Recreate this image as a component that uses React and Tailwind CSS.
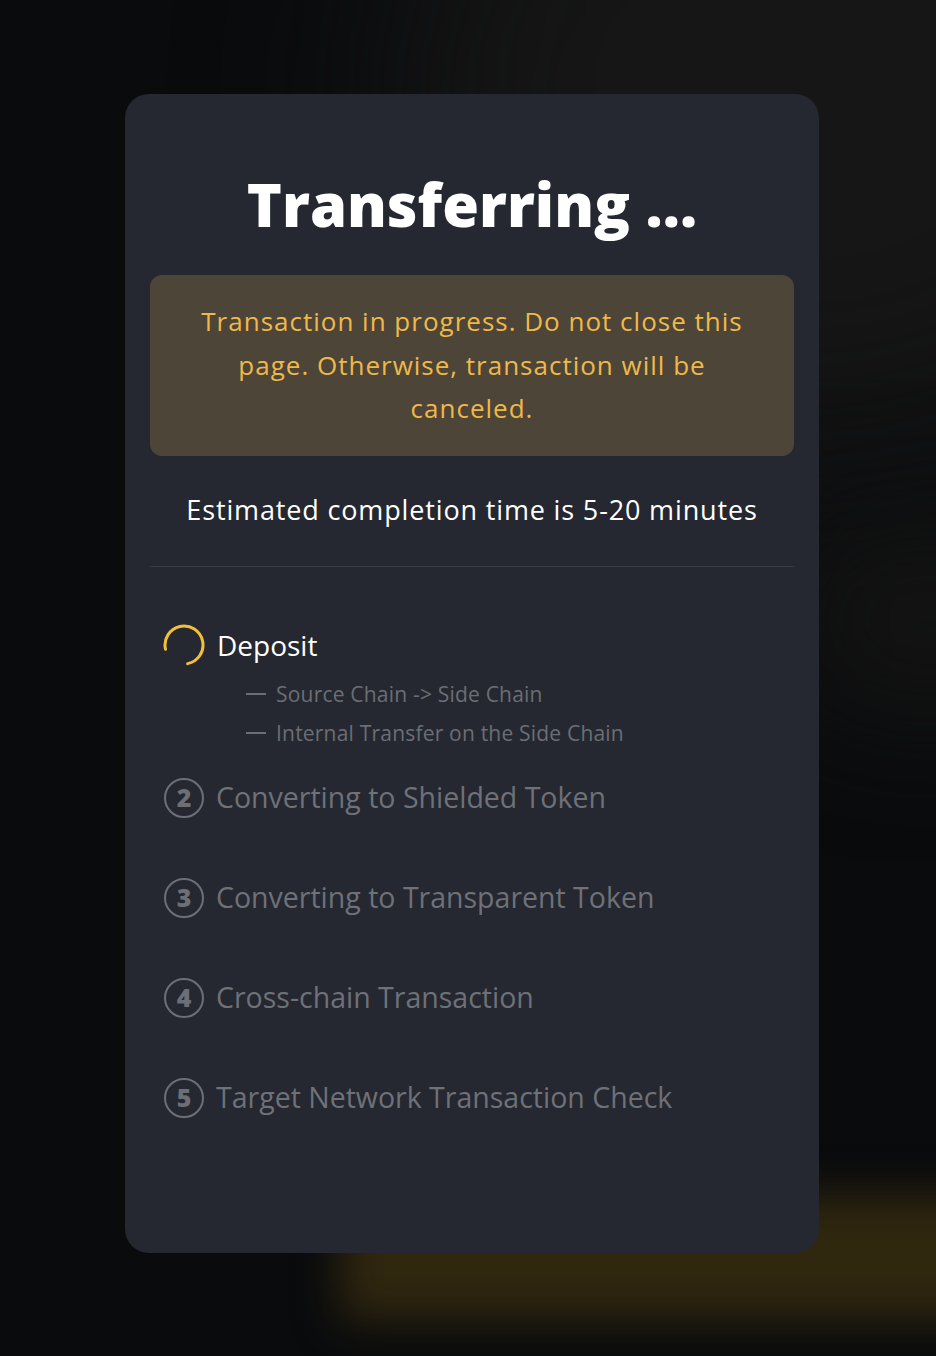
import React from "react";

function Spinner() {
  return (
    <svg width="42" height="42" viewBox="0 0 42 42" className="shrink-0">
      <path
        d="M 2.49 25.27 A 19 19 0 1 1 24.63 39.65"
        fill="none"
        stroke="#f2c038"
        strokeWidth="3"
        strokeLinecap="round"
      />
    </svg>
  );
}

function NumCircle({ n }) {
  return (
    <div className="w-[40px] h-[40px] shrink-0 rounded-full border-[2.5px] border-[#6c6f76] flex items-center justify-center text-[25px] font-extrabold text-[#6c6f76] leading-none">
      {n}
    </div>
  );
}

function Step({ n, label }) {
  return (
    <div className="flex items-center h-[40px] gap-[12px]">
      <NumCircle n={n} />
      <span className="text-[28.5px] text-[#6e7178] leading-none whitespace-nowrap">{label}</span>
    </div>
  );
}

export default function App() {
  return (
    <div className="relative w-[936px] h-[1356px] overflow-hidden bg-[#0a0b0d] font-['Open_Sans',sans-serif]">
      {/* background glows */}
      <div className="absolute left-[400px] top-[-250px] w-[800px] h-[700px] rounded-full bg-[#161616] blur-[100px]" />
      <div className="absolute left-[780px] top-[520px] w-[300px] h-[200px] rounded-full bg-[#131313] blur-[60px]" />
      <div className="absolute left-[340px] top-[1195px] w-[690px] h-[125px] bg-[#30270f] blur-[22px]" />

      <div className="relative pt-[94px] pl-[125px]">
        <div className="w-[694px] h-[1159px] rounded-[24px] bg-[#252830] px-[25px] pt-[74px] flex flex-col">
          <h1 className="text-center text-white font-extrabold text-[59.5px] leading-[72px]">
            Transferring ...
          </h1>

          <div className="mt-[35px] rounded-[12px] bg-[#4d4538] px-[40px] py-[25px] text-center text-[#efb94a] text-[26px] tracking-[1px] leading-[43.5px]">
            Transaction in progress. Do not close this page. Otherwise, transaction will be canceled.
          </div>

          <p className="mt-[36px] text-center text-white text-[27px] tracking-[0.85px] leading-[36px]">
            Estimated completion time is 5-20 minutes
          </p>

          <div className="mt-[38px] h-px bg-[#383b43]" />

          <div className="mt-[57px] pl-[14px] flex flex-col">
            <div className="flex items-center h-[42px] gap-[12px] -ml-[1px]">
              <Spinner />
              <span className="text-[28px] text-white leading-none">Deposit</span>
            </div>
            <div className="mt-[15px] pl-[82px] flex flex-col gap-[13px] text-[21px] tracking-[0.2px] text-[#6b6e75] leading-[26px]">
              <div className="flex items-center gap-[10px]">
                <span className="w-[20px] h-[2px] bg-[#6b6e75]" />
                <span>Source Chain -&gt; Side Chain</span>
              </div>
              <div className="flex items-center gap-[10px]">
                <span className="w-[20px] h-[2px] bg-[#6b6e75]" />
                <span>Internal Transfer on the Side Chain</span>
              </div>
            </div>
            <div className="mt-[32px] flex flex-col gap-[60px]">
              <Step n="2" label="Converting to Shielded Token" />
              <Step n="3" label="Converting to Transparent Token" />
              <Step n="4" label="Cross-chain Transaction" />
              <Step n="5" label="Target Network Transaction Check" />
            </div>
          </div>
        </div>
      </div>
    </div>
  );
}
